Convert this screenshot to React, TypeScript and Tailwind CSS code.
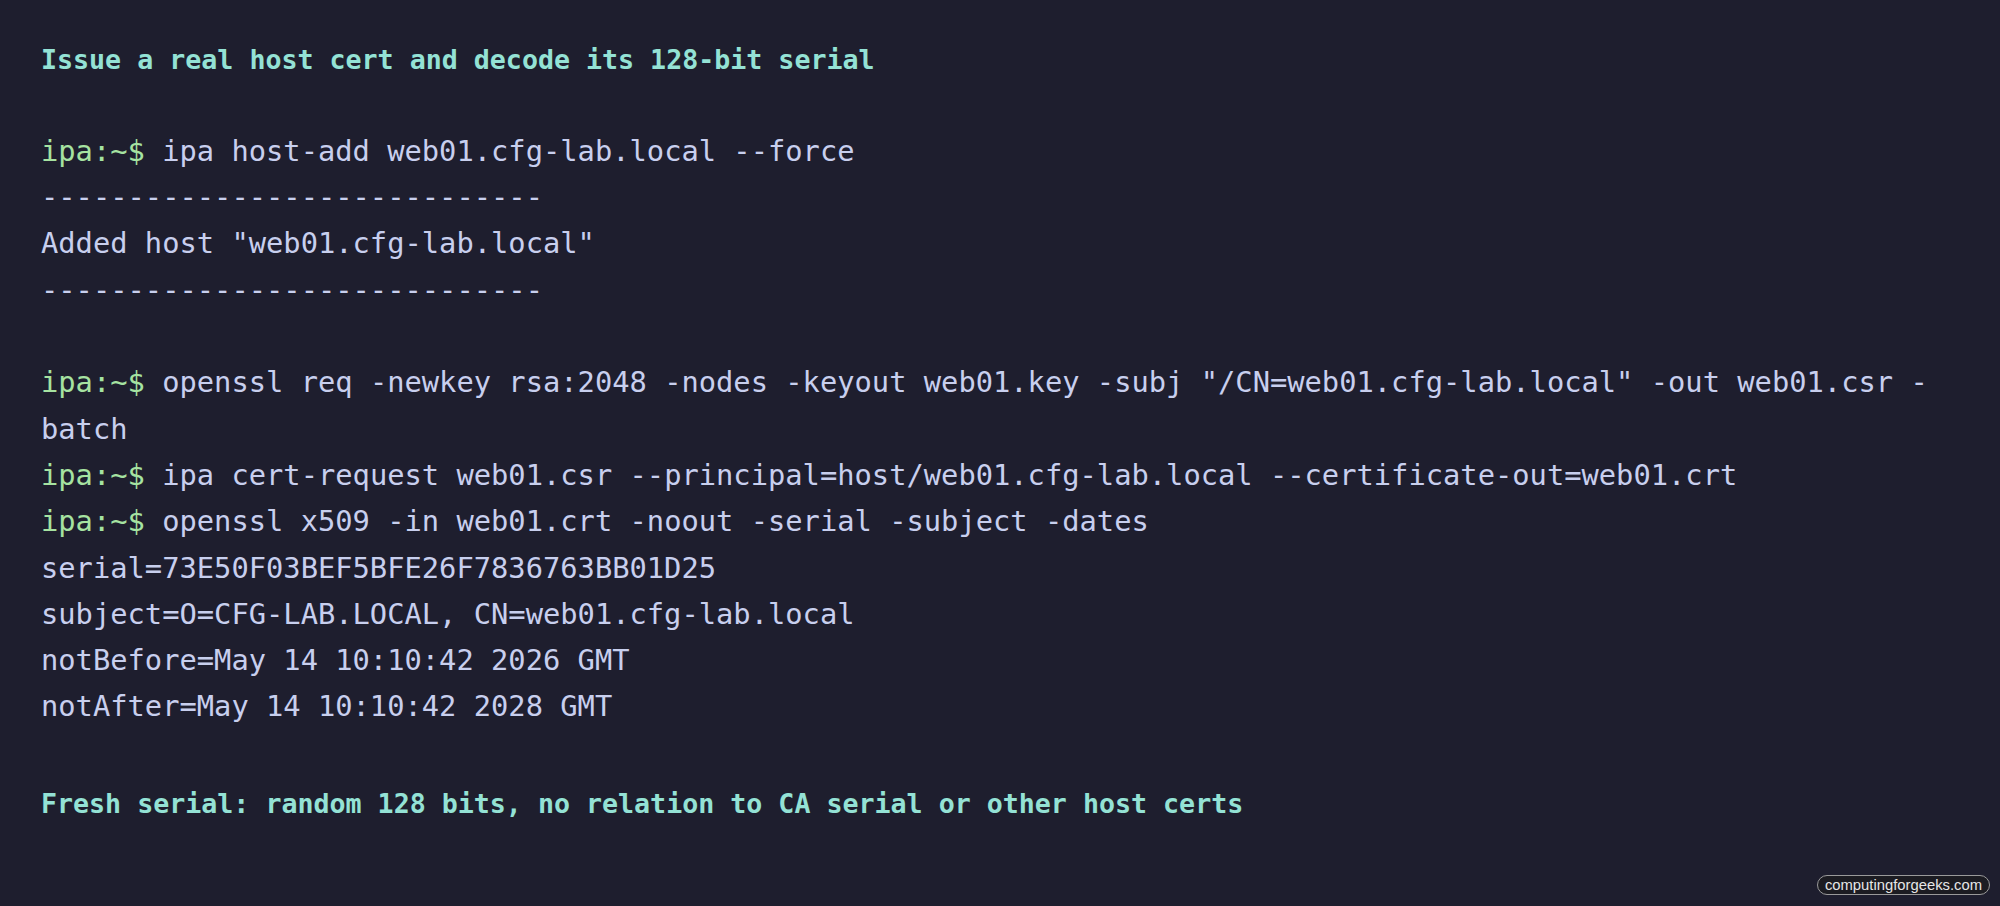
import React from "react";

const mono = "font-['DejaVu_Sans_Mono','Liberation_Mono',monospace]";

function Prompt({ cmd }: { cmd: string }) {
  return (
    <div className="whitespace-pre">
      <span className="text-[#a6e3a1]">ipa:~$</span>
      <span> {cmd}</span>
    </div>
  );
}

function Line({ text }: { text: string }) {
  return <div className="whitespace-pre">{text === "" ? "\u00a0" : text}</div>;
}

export default function App() {
  const dashes = "-----------------------------";
  return (
    <div className="relative h-[906px] w-full overflow-hidden bg-[#1e1e2e]">
      <div className={`${mono} flex flex-col pl-[41px] pt-[37px]`}>
        <div className="whitespace-pre text-[26.64px] leading-[46.3px] font-bold text-[#94e2d5]">
          Issue a real host cert and decode its 128-bit serial
        </div>
        <div className="mt-[44.6px] flex flex-col text-[28.75px] leading-[46.3px] text-[#c8cfee]">
          <Prompt cmd="ipa host-add web01.cfg-lab.local --force" />
          <Line text={dashes} />
          <Line text={'Added host "web01.cfg-lab.local"'} />
          <Line text={dashes} />
          <Line text="" />
          <Prompt cmd={'openssl req -newkey rsa:2048 -nodes -keyout web01.key -subj "/CN=web01.cfg-lab.local" -out web01.csr -'} />
          <Line text="batch" />
          <Prompt cmd="ipa cert-request web01.csr --principal=host/web01.cfg-lab.local --certificate-out=web01.crt" />
          <Prompt cmd="openssl x509 -in web01.crt -noout -serial -subject -dates" />
          <Line text="serial=73E50F03BEF5BFE26F7836763BB01D25" />
          <Line text="subject=O=CFG-LAB.LOCAL, CN=web01.cfg-lab.local" />
          <Line text="notBefore=May 14 10:10:42 2026 GMT" />
          <Line text="notAfter=May 14 10:10:42 2028 GMT" />
        </div>
        <div className="mt-[51.4px] whitespace-pre text-[26.64px] leading-[46.3px] font-bold text-[#94e2d5]">
          Fresh serial: random 128 bits, no relation to CA serial or other host certs
        </div>
      </div>
      <div className="absolute right-[10px] bottom-[11px] flex h-[20px] items-center rounded-full border border-[#9a9a9a] bg-[#1c1c22] px-[7px] font-['Liberation_Sans',Arial,sans-serif] text-[14.8px] leading-none text-[#e6e6e6]">
        computingforgeeks.com
      </div>
    </div>
  );
}
